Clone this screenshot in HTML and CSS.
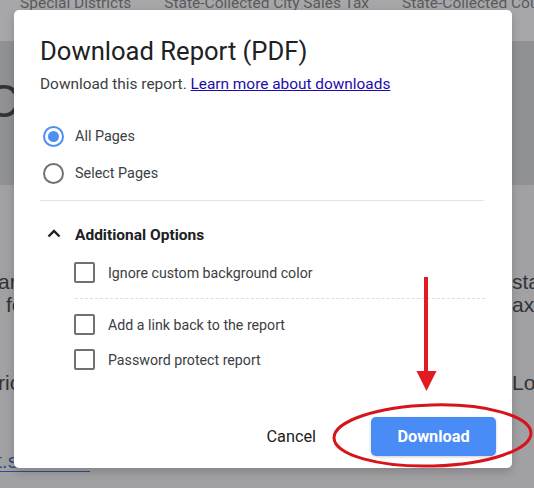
FILE: index.html
```html
<!DOCTYPE html>
<html>
<head>
<meta charset="utf-8">
<link rel="stylesheet" href="styles.css">
</head>
<body>
<div class="page">
  <div class="tabs">
    <span class="tab">Special Districts</span>
    <span class="tab">State-Collected City Sales Tax</span>
    <span class="tab">State-Collected County Sales Tax</span>
  </div>
  <div class="hero"><span class="big">C</span></div>
  <div class="content">
    <div class="para">
      <div class="line"><span class="l">ar, the</span><span class="r">state</span></div>
      <div class="line"><span class="l ind">for</span><span class="r">axes</span></div>
    </div>
    <div class="para">
      <div class="line"><span class="l">rict</span><span class="r">Local</span></div>
    </div>
    <div class="para last">
      <div class="line"><a class="l link" href="#">t.state.tx.us</a></div>
    </div>
  </div>
</div>

<div class="dialog">
  <h1 class="title">Download Report (PDF)</h1>
  <p class="sub">Download this report. <a href="#" class="learn">Learn more about downloads</a></p>

  <div class="radios">
    <label class="radio-row"><span class="radio on"><span class="dot"></span></span><span>All Pages</span></label>
    <label class="radio-row"><span class="radio"></span><span>Select Pages</span></label>
  </div>

  <div class="divider"></div>

  <div class="adv">
    <svg class="chev" width="14" height="9" viewBox="0 0 14 9"><path d="M1.5 7.5 L7 2 L12.5 7.5" fill="none" stroke="#202124" stroke-width="2.4"/></svg>
    <span>Additional Options</span>
  </div>

  <div class="checks">
    <div class="check-row"><span class="box"></span><span>Ignore custom background color</span></div>
    <div class="dashed"></div>
    <div class="check-row"><span class="box"></span><span>Add a link back to the report</span></div>
    <div class="check-row"><span class="box"></span><span>Password protect report</span></div>
  </div>

  <div class="footer">
    <button class="btn cancel">Cancel</button>
    <button class="btn primary">Download</button>
  </div>
</div>

<svg class="annot" width="534" height="488" viewBox="0 0 534 488">
  <line x1="426" y1="277" x2="426" y2="374" stroke="#e01b22" stroke-width="4"/>
  <polygon points="416.5,371 436.5,371 426.5,391" fill="#e01b22"/>
  <ellipse cx="432.5" cy="435.5" rx="98.5" ry="30.5" fill="none" stroke="#d8141b" stroke-width="3" transform="rotate(-1.5 432 436)"/>
</svg>
</body>
</html>
```

FILE: styles.css
```css
html, body {
  margin: 0;
  padding: 0;
}
body {
  width: 534px;
  height: 488px;
  overflow: hidden;
  position: relative;
  background: #a1a1a4;
  font-family: Roboto, "Liberation Sans", sans-serif;
}
.page {
  display: flex;
  flex-direction: column;
  height: 488px;
}
.tabs {
  height: 41px;
  background: #a7a7a9;
  display: flex;
  gap: 33px;
  padding-left: 20px;
  box-sizing: border-box;
  overflow: hidden;
  white-space: nowrap;
}
.tab {
  font-size: 15.5px;
  line-height: 20px;
  margin-top: -7px;
  color: #5a5a5d;
}
.hero {
  height: 144px;
  background: #909195;
  display: flex;
  align-items: center;
}
.big {
  font-family: "Liberation Sans", sans-serif;
  font-size: 46px;
  color: #333336;
  margin-left: -14px;
  margin-top: -24px;
}
.content {
  flex: 1;
  padding-top: 85px;
  font-family: "Liberation Sans", sans-serif;
  font-size: 21px;
  color: #333336;
}
.para {
  margin-bottom: 55px;
}
.para.last {
  margin-bottom: 0;
}
.line {
  display: grid;
  grid-template-columns: 512px 1fr;
  line-height: 23px;
  height: 23px;
  white-space: nowrap;
}
.l {
  margin-left: -2px;
}
.l.ind {
  margin-left: 6px;
}
.link {
  color: #2e4f86;
  text-decoration: underline;
  text-underline-offset: 3px;
  margin-left: -4px;
  width: 94px;
  overflow: hidden;
}

/* dialog */
.dialog {
  position: absolute;
  left: 14px;
  top: 10px;
  width: 498px;
  height: 458px;
  box-sizing: border-box;
  background: #fff;
  border-radius: 5px;
  box-shadow: 0 4px 10px rgba(0,0,0,0.18);
  padding: 26px 28px 0 26px;
  color: #3c4043;
}
.title {
  margin: 0;
  font-size: 25.6px;
  line-height: 30px;
  font-weight: 400;
  color: #202124;
}
.sub {
  margin: 8px 0 0;
  font-size: 15.4px;
  line-height: 20px;
  color: #3c4043;
}
.learn {
  color: #1a0dab;
  text-decoration: underline;
}
.radios {
  margin-top: 24px;
  display: flex;
  flex-direction: column;
}
.radio-row {
  height: 37px;
  display: flex;
  align-items: center;
  gap: 11px;
  padding-left: 3px;
  font-size: 14.4px;
  color: #3c4043;
}
.radio {
  width: 21px;
  height: 21px;
  box-sizing: border-box;
  border: 2px solid #6f7175;
  border-radius: 50%;
  display: flex;
  align-items: center;
  justify-content: center;
}
.radio.on {
  border-color: #4d8ff5;
}
.dot {
  width: 11px;
  height: 11px;
  border-radius: 50%;
  background: #4d8ff5;
}
.divider {
  margin-top: 8px;
  height: 1px;
  background: #e3e3e3;
}
.adv {
  margin-top: 19px;
  height: 30px;
  display: flex;
  align-items: center;
  gap: 14px;
  padding-left: 7px;
  font-size: 15.5px;
  font-weight: 700;
  color: #202124;
}
.chev {
  margin-top: -3px;
}
.checks {
  margin-top: 5px;
  padding-left: 34px;
  display: flex;
  flex-direction: column;
}
.check-row {
  height: 35px;
  display: flex;
  align-items: center;
  gap: 13px;
  font-size: 14.2px;
  color: #3c4043;
}
.box {
  width: 21px;
  height: 21px;
  box-sizing: border-box;
  border: 2px solid #6f7175;
  border-radius: 2px;
}
.dashed {
  margin: 8px -1px 8px 1px;
  border-top: 1px dashed #dedee2;
}
.footer {
  margin-top: 40px;
  margin-right: -12px;
  display: flex;
  justify-content: flex-end;
  align-items: center;
  gap: 40px;
}
.btn {
  font-family: Roboto, "Liberation Sans", sans-serif;
  font-size: 16.3px;
  height: 39px;
  border: none;
  border-radius: 5px;
  background: transparent;
  cursor: pointer;
}
.cancel {
  color: #202124;
  padding: 0 15px;
}
.primary {
  width: 125px;
  background: #4a8cf6;
  color: #fff;
  font-weight: 700;
  box-shadow: 0 1px 3px rgba(0,0,0,0.2);
}
.annot {
  position: absolute;
  left: 0;
  top: 0;
  pointer-events: none;
}
```
